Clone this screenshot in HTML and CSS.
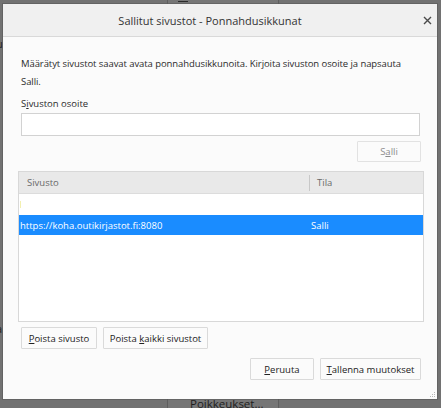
FILE: index.html
```html
<!DOCTYPE html>
<html lang="fi">
<head>
<meta charset="utf-8">
<title>Sallitut sivustot - Ponnahdusikkunat</title>
<link rel="stylesheet" href="styles.css">
</head>
<body>
<div class="desktop">
  <div class="behind-btn behind-top"><span class="behind-dash"></span></div>
  <div class="behind-btn behind-bottom"><span class="behind-label">Poikkeukset...</span></div>
  <span class="frag frag-1">u</span>
  <span class="frag frag-2">a</span>

  <div class="dialog">
    <div class="titlebar">
      <span class="title">Sallitut sivustot - Ponnahdusikkunat</span>
      <span class="close">
        <svg width="9" height="9" viewBox="0 0 9 9"><path d="M1 1 L8 8 M8 1 L1 8" stroke="#4a4a4a" stroke-width="1.4" fill="none"/></svg>
      </span>
    </div>
    <div class="content">
      <p class="desc">Määrätyt sivustot saavat avata ponnahdusikkunoita. Kirjoita sivuston osoite ja napsauta Salli.</p>
      <label class="label">S<u>i</u>vuston osoite</label>
      <div class="input"></div>
      <div class="allow-row">
        <button class="btn btn-allow" disabled>S<u>a</u>lli</button>
      </div>
      <div class="list">
        <div class="list-head">
          <span class="col-site">Sivusto</span>
          <span class="col-status">Tila</span>
        </div>
        <div class="list-row empty"><span class="caret"></span></div>
        <div class="list-row selected">
          <span class="col-site">https://koha.outikirjastot.fi:8080</span>
          <span class="col-status">Salli</span>
        </div>
      </div>
      <div class="remove-row">
        <button class="btn btn-remove"><u>P</u>oista sivusto</button>
        <button class="btn btn-remove-all">Poista <u>k</u>aikki sivustot</button>
      </div>
      <div class="footer">
        <button class="btn btn-cancel"><u>P</u>eruuta</button>
        <button class="btn btn-save"><u>T</u>allenna muutokset</button>
      </div>
    </div>
    <span class="grip">
      <svg width="6" height="6" viewBox="0 0 6 6"><g fill="#b8b8b8"><rect x="4" y="0" width="1" height="1"/><rect x="2" y="2" width="1" height="1"/><rect x="4" y="2" width="1" height="1"/><rect x="0" y="4" width="1" height="1"/><rect x="2" y="4" width="1" height="1"/><rect x="4" y="4" width="1" height="1"/></g></svg>
    </span>
  </div>
</div>
</body>
</html>
```

FILE: styles.css
```css
html, body {
  margin: 0;
  padding: 0;
}
body {
  width: 441px;
  height: 408px;
  overflow: hidden;
  background: #727272;
  font-family: "Open Sans", "Noto Sans", sans-serif;
}
.desktop {
  position: relative;
  width: 441px;
  height: 408px;
}
.behind-btn {
  position: absolute;
  left: 167px;
  width: 110px;
  border-left: 1px solid #5e5e5e;
  border-right: 1px solid #5e5e5e;
  background: #767676;
}
.behind-top {
  top: 0;
  height: 6px;
}
.behind-dash {
  position: absolute;
  left: 10px;
  top: 1px;
  width: 10px;
  height: 1px;
  background: #2a2a2a;
}
.behind-bottom {
  top: 396px;
  height: 12px;
}
.behind-label {
  position: absolute;
  left: 22px;
  top: 2px;
  font-size: 11.5px;
  line-height: 12px;
  color: #1e1e1e;
  white-space: nowrap;
}
.frag {
  position: absolute;
  left: -4px;
  font-size: 11px;
  color: #222;
}
.frag-1 { top: 36px; }
.frag-2 { top: 321px; }

.dialog {
  position: absolute;
  left: 3px;
  top: 4px;
  width: 434px;
  height: 395px;
  background: #fbfbfb;
  box-shadow: 0 0 0 1px rgba(90,90,90,0.6);
  display: flex;
  flex-direction: column;
}
.titlebar {
  height: 32px;
  background: #f0f0f0;
  border-bottom: 1px solid #d9d9d9;
  display: flex;
  align-items: center;
  justify-content: center;
  position: relative;
  padding-right: 20px;
}
.title {
  font-size: 11px;
  color: #333;
}
.close {
  position: absolute;
  right: 5px;
  top: 12px;
  width: 9px;
  height: 9px;
  display: flex;
}
.content {
  display: flex;
  flex-direction: column;
  padding: 18px 16px 0 15px;
  color: #2b2b2b;
  font-size: 9.5px;
}
.desc {
  margin: 0 0 0 3px;
  line-height: 18px;
  width: 390px;
  letter-spacing: -0.08px;
}
.label {
  display: block;
  margin: 4px 0 0 3px;
  line-height: 18px;
}
.input {
  margin: 0 0 0 3px;
  width: 397px;
  height: 21px;
  background: #fff;
  border: 1px solid #d2d2d2;
}
.allow-row {
  display: flex;
  justify-content: flex-end;
  margin-top: 5px;
}
.btn {
  font-family: inherit;
  font-size: 9.5px;
  color: #222;
  background: #fbfbfb;
  border: 1px solid #dadada;
  border-radius: 1px;
  height: 22px;
  padding: 0;
  margin: 0;
  text-align: center;
  white-space: nowrap;
}
.btn u {
  text-underline-offset: 1px;
}
.btn-allow {
  width: 64px;
  height: 21px;
  color: #8c8c8c;
  background: #fbfbfb;
  border-color: #e2e2e2;
}
.list {
  margin-top: 9px;
  width: 404px;
  height: 149px;
  background: #fff;
  border: 1px solid #d8d8d8;
  display: flex;
  flex-direction: column;
}
.list-head {
  height: 22px;
  background: #e9e9e9;
  border-bottom: 1px solid #dcdcdc;
  display: flex;
  align-items: center;
  color: #6a6a6a;
  box-sizing: border-box;
}
.list-head .col-site {
  width: 291px;
  padding-left: 8px;
  box-sizing: border-box;
  border-right: 1px solid #c8c8c8;
  line-height: 16px;
}
.list-head .col-status {
  padding-left: 7px;
}
.list-row {
  display: flex;
  align-items: center;
  height: 21px;
}
.empty {
  position: relative;
}
.caret {
  position: absolute;
  left: 1px;
  top: 7px;
  width: 1px;
  height: 7px;
  background: #f3f0b0;
}
.selected {
  height: 20px;
  background: #1a8cff;
  color: #fff;
}
.selected .col-site {
  width: 292px;
  padding-left: 1px;
  box-sizing: border-box;
}
.remove-row {
  display: flex;
  gap: 6px;
  margin: 5px 0 0 3px;
}
.btn-remove { width: 76px; }
.btn-remove-all { width: 105px; }
.footer {
  display: flex;
  justify-content: flex-end;
  gap: 6px;
  margin-top: 9px;
}
.btn-cancel { width: 64px; height: 22px; }
.btn-save { width: 101px; height: 22px; }
.grip {
  position: absolute;
  right: 1px;
  bottom: 1px;
  width: 6px;
  height: 6px;
  display: flex;
}
```
